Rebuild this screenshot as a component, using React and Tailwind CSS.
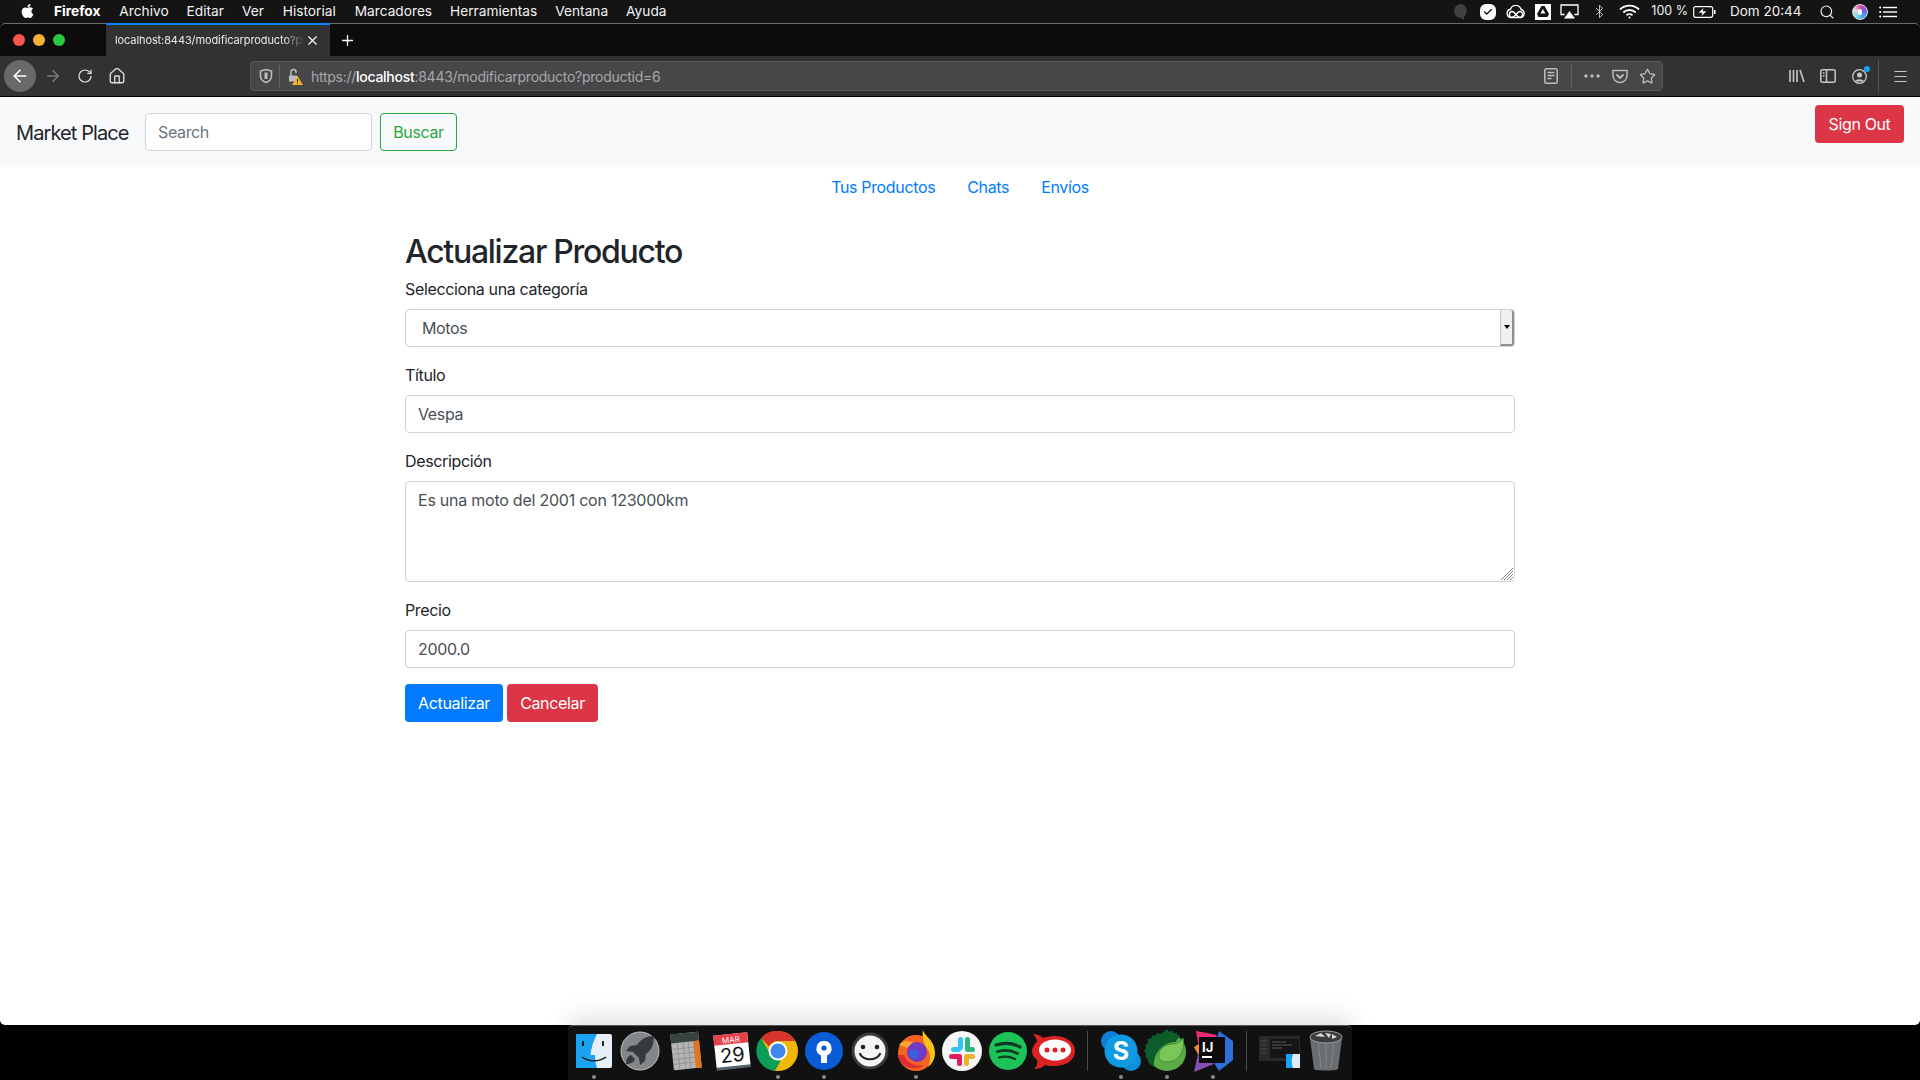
import React from "react";
import { FaApple } from "react-icons/fa";
import { ArrowLeft, ArrowRight, RotateCw, House, Plus, X, Search, Bluetooth, Menu, Star, Check } from "lucide-react";

const menuItems = [
  ["Archivo", "ml-[19px]"],
  ["Editar", "ml-[18px]"],
  ["Ver", "ml-[18px]"],
  ["Historial", "ml-[19px]"],
  ["Marcadores", "ml-[19px]"],
  ["Herramientas", "ml-[18px]"],
  ["Ventana", "ml-[18px]"],
  ["Ayuda", "ml-[18px]"],
];

const MenuBar = () => (
  <div className="h-[23px] shrink-0 flex items-center bg-[#141414] text-[#f2f2f2] text-[13.7px] pl-[20px] pr-[23px]">
    <FaApple className="w-[15px] h-[16px] mb-[2px] text-white" />
    <span className="ml-[19px] font-bold text-white">Firefox</span>
    {menuItems.map(([label, ml]) => (
      <span key={label} className={ml}>{label}</span>
    ))}
    <div className="ml-auto flex items-center">
      <svg width="16" height="17" viewBox="0 0 16 17"><path d="M8 1a7 7 0 1 0 0 14l3 1.500V13.500A7 7 0 0 0 8 1z" fill="#414143" /></svg>
      <span className="ml-[11px] w-[16px] h-[16px] rounded-[6px] bg-white flex items-center justify-center">
        <Check className="w-[10px] h-[10px] text-black" strokeWidth={3} />
      </span>
      <svg className="ml-[10px]" width="20" height="14" viewBox="0 0 20 14" fill="none" stroke="#fff" strokeWidth="1.400">
        <path d="M5.500 12.500a4.200 4.200 0 0 1-1-8.300A5.500 5.500 0 0 1 15 4.300a4.200 4.200 0 0 1-.5 8.200z" />
        <path d="M5.500 12.500c-3-1-2.500-6 .5-6 3.500 0 4.500 6 8 6 3 0 3.500-6 0-6-3.500 0-4.500 6-8.500 6" />
      </svg>
      <span className="ml-[9px] w-[16px] h-[16px] bg-white flex items-center justify-center">
        <svg width="12" height="11" viewBox="0 0 12 11"><path d="M4.500 0h3l4.500 8-1.500 3H1.500L0 8z" fill="#111" /><path d="M5.800 3 3.500 7.500h5z" fill="#fff" /></svg>
      </span>
      <svg className="ml-[9px]" width="19" height="15" viewBox="0 0 19 15" fill="none">
        <path d="M4.500 10.500H1V1h17v9.500h-3.500" stroke="#fff" strokeWidth="1.300" />
        <path d="M9.500 7 15 14.500H4z" fill="#fff" />
      </svg>
      <Bluetooth className="ml-[13px] w-[15px] h-[17px] text-[#e8e8e8]" strokeWidth={1.300} />
      <svg className="ml-[12px]" width="21" height="15" viewBox="0 0 21 15" fill="none" stroke="#fff" strokeWidth="1.800">
        <path d="M1 5.500a13.500 13.500 0 0 1 19 0" />
        <path d="M4.300 8.500a9 9 0 0 1 12.400 0" />
        <path d="M7.500 11.300a4.300 4.300 0 0 1 6 0" />
        <circle cx="10.500" cy="13.500" r="1" fill="#fff" stroke="none" />
      </svg>
      <span className="ml-[11px] text-[12.5px]">100 %</span>
      <svg className="ml-[5px]" width="23" height="12" viewBox="0 0 23 12" fill="none">
        <rect x="0.700" y="0.700" width="19" height="10.600" rx="2" stroke="#fff" strokeWidth="1.200" />
        <rect x="21" y="4" width="1.500" height="4" fill="#fff" />
        <path d="M11 1 5 7h4L8 11l6-6h-4z" fill="#fff" stroke="#141414" strokeWidth="0.700" />
      </svg>
      <span className="ml-[14px] w-[73px] whitespace-nowrap text-[13.5px]">Dom 20:44</span>
      <Search className="ml-[16px] w-[16px] h-[16px]" strokeWidth={1.700} />
      <span className="ml-[17px] w-[16px] h-[16px] rounded-full bg-[conic-gradient(#e0479e,#7a5cd6,#3fa9f5,#7fd6e8,#e0e0e0,#e0479e)] border border-[#ddd] flex items-center justify-center">
        <span className="w-[4px] h-[6px] bg-white rounded-full" />
      </span>
      <svg className="ml-[11px]" width="18" height="12" viewBox="0 0 18 12" fill="#fff">
        <circle cx="1.200" cy="1.500" r="1.100" /><circle cx="1.200" cy="6" r="1.100" /><circle cx="1.200" cy="10.500" r="1.100" />
        <rect x="4" y="0.800" width="14" height="1.400" /><rect x="4" y="5.300" width="14" height="1.400" /><rect x="4" y="9.800" width="14" height="1.400" />
      </svg>
    </div>
  </div>
);

const TabBar = () => (
  <div className="h-[33px] shrink-0 flex bg-[#0c0c0d] rounded-t-[5px] border-t border-[#6a6a6a] text-white">
    <div className="w-[106px] flex items-center pl-[13px] gap-[8px]">
      <span className="w-[12px] h-[12px] rounded-full bg-[#f6544f]" />
      <span className="w-[12px] h-[12px] rounded-full bg-[#fbb030]" />
      <span className="w-[12px] h-[12px] rounded-full bg-[#2bc93f]" />
    </div>
    <div className="w-[224px] -mt-[1px] bg-[#323234] border-t-2 border-[#0a84ff] flex items-center pl-[9px]">
      <span className="w-[189px] overflow-hidden whitespace-nowrap text-[11px] tracking-[-0.1px] text-[#e8e8e8] [mask-image:linear-gradient(to_right,black_90%,transparent)]">
        localhost:8443/modificarproducto?productid=6
      </span>
      <X className="ml-[1px] w-[15px] h-[15px]" strokeWidth={1.800} />
    </div>
    <div className="flex items-center ml-[9px]">
      <Plus className="w-[17px] h-[17px]" strokeWidth={1.800} />
    </div>
  </div>
);

const Toolbar = () => (
  <div className="h-[41px] shrink-0 flex items-center bg-[#323234] border-b border-black text-[#e0e0e0] pl-[4px]">
    <span className="flex items-center justify-center w-[32px] h-[32px] rounded-full bg-[#69696b]">
      <ArrowLeft className="w-[20px] h-[20px] text-white" strokeWidth={1.800} />
    </span>
    <ArrowRight className="ml-[8px] w-[18px] h-[18px] text-[#7d7d7f]" strokeWidth={1.800} />
    <RotateCw className="ml-[15px] w-[16px] h-[16px]" strokeWidth={1.800} />
    <House className="ml-[15px] w-[18px] h-[18px]" strokeWidth={1.800} />
    <div className="ml-[124px] w-[1413px] h-[30px] rounded-[4px] bg-[#474749] border border-[#555557] flex items-center text-[#a8a8aa]">
      <svg className="ml-[8px]" width="14" height="16" viewBox="0 0 14 16" fill="none" stroke="#bdbdbf" strokeWidth="1.600">
        <path d="M7 1.500 1.500 3v5c0 3 2.500 5.500 5.500 6.500 3-1 5.500-3.500 5.500-6.500V3z" />
        <path d="M7 4.500v6.500" strokeWidth="3" />
      </svg>
      <span className="ml-[6px] w-px h-[24px] bg-[#616163]" />
      <svg className="ml-[7px]" width="16" height="17" viewBox="0 0 16 17">
        <path d="M2 7.500h8v6H2z" fill="#bdbdbf" />
        <path d="M4 7.500V4a2.500 2.500 0 0 1 5 0v1" fill="none" stroke="#bdbdbf" strokeWidth="1.500" />
        <path d="M10.500 8 16 17H5z" fill="#fbb030" />
        <rect x="10" y="11" width="1" height="3" fill="#222" /><rect x="10" y="14.800" width="1" height="1" fill="#222" />
      </svg>
      <span className="ml-[8px] text-[14px] tracking-[-0.27px] whitespace-nowrap">
        https://<span className="text-white font-medium">localhost</span>:8443/modificarproducto?productid=6
      </span>
      <div className="ml-auto flex items-center text-[#bdbdbf]">
        <svg width="14" height="16" viewBox="0 0 14 16" fill="none" stroke="currentColor" strokeWidth="1.500">
          <rect x="0.800" y="0.800" width="12.400" height="14.400" rx="1.500" />
          <path d="M3.500 4.500h7M3.500 7.500h7M3.500 10.500h4" />
        </svg>
        <span className="ml-[13px] w-px h-[24px] bg-[#616163]" />
        <svg className="ml-[12px]" width="16" height="4" viewBox="0 0 16 4" fill="currentColor">
          <circle cx="2" cy="2" r="1.700" /><circle cx="8" cy="2" r="1.700" /><circle cx="14" cy="2" r="1.700" />
        </svg>
        <svg className="ml-[12px]" width="16" height="15" viewBox="0 0 16 15" fill="none" stroke="currentColor" strokeWidth="1.500">
          <path d="M1 1.500h14v5a7 7 0 0 1-14 0z" />
          <path d="m4.500 5.500 3.500 3.500 3.500-3.500" strokeWidth="1.800" />
        </svg>
        <Star className="ml-[11px] mr-[6px] w-[17px] h-[17px]" strokeWidth={1.800} />
      </div>
    </div>
    <div className="ml-auto flex items-center text-[#c8c8ca] pr-[11px]">
      <svg width="16" height="14" viewBox="0 0 16 14" fill="none" stroke="currentColor" strokeWidth="1.600">
        <path d="M1 1v12M4.500 1v12M8 1v12M11 1l4 12" />
      </svg>
      <svg className="ml-[15px]" width="16" height="14" viewBox="0 0 16 14" fill="none" stroke="currentColor" strokeWidth="1.500">
        <rect x="0.800" y="0.800" width="14.400" height="12.400" rx="1.500" />
        <path d="M6.500 1v12M2.800 4h1.700M2.800 7h1.700" />
      </svg>
      <span className="relative ml-[16px] w-[15px] h-[15px]">
        <svg width="15" height="15" viewBox="0 0 15 15" fill="none" stroke="currentColor" strokeWidth="1.300">
          <circle cx="7.500" cy="7.500" r="6.800" />
          <circle cx="7.500" cy="6" r="2.500" fill="currentColor" stroke="none" />
          <path d="M3 12.500c1-3 8-3 9 0" fill="currentColor" stroke="none" />
        </svg>
        <span className="absolute -top-[3px] -right-[3px] w-[6px] h-[6px] rounded-full bg-[#0ea5e9]" />
      </span>
      <span className="ml-[11px] w-px h-[33px] bg-[#555557]" />
      <Menu className="ml-[13px] w-[17px] h-[17px]" strokeWidth={1.500} />
    </div>
  </div>
);

const inputClass =
  "block w-full h-[38px] px-[12px] text-[16px] text-[#495057] bg-white border border-[#ced4da] rounded-[4px] outline-none";

const Field = ({ label, children }) => (
  <div className="mb-[16px]">
    <label className="block mb-[8px] text-[16px] leading-[24px]">{label}</label>
    {children}
  </div>
);

const Page = () => (
  <div className="flex-1 min-h-0 bg-white text-[#212529] tracking-[-0.022em] rounded-b-[5px] overflow-hidden">
    <nav className="h-[70px] bg-[#f8f9fa] flex items-start pl-[16px] pr-[16px]">
      <span className="mt-[21px] w-[112px] text-[20px] leading-[30px] tracking-[-0.045em] whitespace-nowrap">Market Place</span>
      <input
        placeholder="Search"
        className="ml-[17px] mt-[16px] w-[227px] h-[38px] px-[12px] text-[16px] bg-white border border-[#ced4da] rounded-[4px] outline-none placeholder:text-[#6c757d]"
      />
      <button className="ml-[8px] mt-[16px] w-[77px] h-[38px] text-[16px] text-[#28a745] border border-[#28a745] rounded-[4px]">Buscar</button>
      <button className="ml-auto mt-[8px] w-[89px] h-[38px] text-[16px] text-white bg-[#dc3545] rounded-[4px]">Sign Out</button>
    </nav>
    <div className="h-[40px] flex items-center justify-center gap-[32px] text-[16px] text-[#007bff]">
      <a>Tus Productos</a>
      <a>Chats</a>
      <a>Envíos</a>
    </div>
    <div className="w-[1110px] mx-auto mt-[26px]">
      <h1 className="text-[32px] leading-[38px] font-[550] tracking-[-0.04em] mb-[6px]">Actualizar Producto</h1>
      <Field label="Selecciona una categoría">
        <div className="relative">
          <select className={`${inputClass} appearance-none pl-[16px]`} defaultValue="Motos">
            <option>Motos</option>
          </select>
          <span className="absolute right-[1px] top-[1px] w-[14px] h-[36px] bg-[#efefef] border-l border-[#c4c4c4] border-r-2 border-r-[#8f8f8f] border-b-2 border-b-[#8f8f8f] rounded-r-[3px] flex items-center justify-center">
            <span className="w-0 h-0 border-x-[3px] border-x-transparent border-t-[4px] border-t-black" />
          </span>
        </div>
      </Field>
      <Field label="Título">
        <input className={inputClass} defaultValue="Vespa" />
      </Field>
      <Field label="Descripción">
        <div className="relative">
          <textarea
            className="block w-full h-[101px] px-[12px] py-[6px] text-[16px] leading-[24px] tracking-[-0.015em] text-[#495057] bg-white border border-[#ced4da] rounded-[4px] outline-none resize-none"
            defaultValue="Es una moto del 2001 con 123000km"
          />
          <svg className="absolute right-[2px] bottom-[2px] pointer-events-none" width="12" height="12" viewBox="0 0 12 12" stroke="#8a8a8a" strokeWidth="1">
            <path d="M12 0 0 12M12 3 3 12M12 6 6 12M12 9 9 12" />
          </svg>
        </div>
      </Field>
      <Field label="Precio">
        <input className={inputClass} defaultValue="2000.0" />
      </Field>
      <div className="flex gap-[4px]">
        <button className="w-[98px] h-[38px] text-[16px] text-white bg-[#007bff] rounded-[4px]">Actualizar</button>
        <button className="w-[91px] h-[38px] text-[16px] text-white bg-[#dc3545] rounded-[4px]">Cancelar</button>
      </div>
    </div>
  </div>
);

const I = ({ children }) => (
  <svg width="46" height="46" viewBox="0 0 46 46" className="overflow-visible">{children}</svg>
);

const Finder = () => (
  <I>
    <rect x="5" y="6" width="36" height="34" rx="2" fill="#e6eff7" />
    <path d="M7 6h19c-4 8-6 14-6.500 21H24c0 4 .5 8 2 13H7a2 2 0 0 1-2-2V8a2 2 0 0 1 2-2z" fill="#1aa3f2" />
    <path d="M12 13v5M32 13v5" stroke="#111" strokeWidth="1.800" />
    <path d="M11 29c7 5 17 5 24 0" fill="none" stroke="#111" strokeWidth="1.300" />
  </I>
);

const Launchpad = () => (
  <I>
    <circle cx="23" cy="23" r="19" fill="#83878a" stroke="#bfc3c5" strokeWidth="1" />
    <path d="M37 8c-7 0-13 3-17 9l-7 1-4 5 7 1 6 6 1 7 5-4 1-7c6-4 8-11 8-18z" fill="#37393c" />
    <path d="M14 27c-3 1-5 4-5 9 5 0 8-2 9-5z" fill="#37393c" />
  </I>
);

const Calculator = () => (
  <I>
    <g transform="rotate(-6 23 23)">
      <rect x="9" y="5" width="28" height="36" rx="1" fill="#b5b5b5" />
      <rect x="9" y="5" width="28" height="9" fill="#37423f" />
      <rect x="31" y="14" width="6" height="27" fill="#e07620" />
      <path d="M9 20h22M9 25h22M9 30h22M9 35h22M15 14v27M21 14v27M26 14v27" stroke="#8d8d8d" strokeWidth="0.800" />
    </g>
  </I>
);

const Calendar = () => (
  <I>
    <g transform="rotate(-6 23 23)">
      <rect x="6" y="9" width="34" height="32" fill="#59646a" />
      <rect x="6" y="6" width="34" height="32" fill="#fff" />
      <rect x="6" y="6" width="34" height="10" fill="#e8414a" />
      <text x="23" y="14.500" textAnchor="middle" fontSize="8" fill="#fff" fontFamily="Inter, sans-serif">MAR</text>
      <text x="23" y="34" textAnchor="middle" fontSize="20" fill="#111" fontFamily="Inter, sans-serif">29</text>
    </g>
  </I>
);

const Chrome = () => (
  <I>
    <circle cx="23" cy="23" r="20" fill="#f2b705" />
    <path d="M23 3a20 20 0 0 1 17.300 10H23a10 10 0 0 0-9 5.500L6 10A20 20 0 0 1 23 3z" fill="#d8352a" />
    <path d="M6 10l8.500 14.500A10 10 0 0 0 26 32l-6 10.800A20 20 0 0 1 6 10z" fill="#0c9d58" />
    <circle cx="23" cy="23" r="9.500" fill="#fff" />
    <circle cx="23" cy="23" r="7.500" fill="#3f87ee" />
  </I>
);

const OnePassword = () => (
  <I>
    <circle cx="23" cy="23" r="19" fill="#0a5cd6" />
    <path d="M23 13a7.500 7.500 0 0 0-3 14.400V35h6v-7.600A7.500 7.500 0 0 0 23 13z" fill="#fff" />
    <circle cx="23" cy="20" r="2.600" fill="#0a5cd6" />
  </I>
);

const Smile = () => (
  <I>
    <circle cx="23" cy="23" r="17" fill="#f5f5f5" stroke="#3a3a3a" strokeWidth="3" />
    <circle cx="16" cy="19" r="2.300" fill="#222" />
    <circle cx="30" cy="19" r="2.300" fill="#222" />
    <path d="M13 26c4 7 16 7 20 0" fill="none" stroke="#222" strokeWidth="2.200" strokeLinecap="round" />
  </I>
);

const Firefox = () => (
  <I>
    <circle cx="23" cy="25" r="18" fill="#f5631f" />
    <path d="M30 1c0 7 12 10 12 24 0 6-3 11-7 14 3-6 3-14-2-20-3-5-4-11-3-18z" fill="#fdc21c" />
    <path d="M6 17c4-5 10-5 14-2l-6 5z" fill="#ffa436" />
    <circle cx="24" cy="24" r="10" fill="#7139c4" />
    <circle cx="21" cy="26" r="5" fill="#3d60d8" />
    <path d="M5 27c2 12 16 17 26 10-8 2-16-1-20-10z" fill="#e02c36" />
  </I>
);

const Slack = () => (
  <I>
    <circle cx="23" cy="23" r="20" fill="#f6f6f6" />
    <rect x="19" y="9" width="5" height="13" rx="2.500" fill="#36c5f0" />
    <rect x="12" y="19" width="10" height="5" rx="2.500" fill="#36c5f0" />
    <rect x="26" y="9" width="5" height="13" rx="2.500" fill="#2eb67d" />
    <rect x="26" y="19" width="10" height="5" rx="2.500" fill="#2eb67d" />
    <rect x="25" y="26" width="5" height="12" rx="2.500" fill="#ecb22e" />
    <rect x="26" y="26" width="10" height="5" rx="2.500" fill="#ecb22e" />
    <rect x="18" y="26" width="5" height="12" rx="2.500" fill="#e01e5a" />
    <rect x="10" y="26" width="12" height="5" rx="2.500" fill="#e01e5a" />
  </I>
);

const Spotify = () => (
  <I>
    <circle cx="23" cy="23" r="19" fill="#1ed760" fillOpacity="0.900" />
    <g fill="none" stroke="#0c3b20" strokeLinecap="round">
      <path d="M11 17c8-2.500 17-2 24 2" strokeWidth="3.200" />
      <path d="M12.500 23.500c7-2 14-1.500 20 2" strokeWidth="2.800" />
      <path d="M14 29.500c6-1.500 11-1 16 1.500" strokeWidth="2.300" />
    </g>
  </I>
);

const RocketChat = () => (
  <I>
    <path d="M2 6c4 0 8 2 10 4 3-1 7-2 11-2 12 0 21 6 21 15s-9 15-21 15c-3 0-6 0-9-1-3 3-7 4-11 4 3-3 4-6 3-9C2 29 1 26 1 23c0-3 2-7 5-9 0-3-2-6-4-8z" fill="#db2323" />
    <ellipse cx="24" cy="22" rx="16" ry="10.500" fill="#fff" />
    <circle cx="16" cy="22" r="2.500" fill="#db2323" /><circle cx="24" cy="22" r="2.500" fill="#db2323" /><circle cx="32" cy="22" r="2.500" fill="#db2323" />
  </I>
);

const Skype = () => (
  <I>
    <circle cx="13" cy="13" r="10" fill="#0f7fd6" />
    <circle cx="33" cy="33" r="10" fill="#0f8fdc" />
    <circle cx="23" cy="23" r="16.500" fill="#0f9be4" />
    <text x="23" y="32" textAnchor="middle" fontSize="25" fontWeight="700" fill="#fff" fontFamily="Inter, sans-serif">S</text>
  </I>
);

const Spring = () => (
  <I>
    <circle cx="23" cy="24" r="19" fill="#5bab46" />
    <path d="M23 1l2 3 3-2 1.500 3.500 3.500-1 .5 3 3-.5-5 7C20 14 9 24 10 39l-3-2-3-3-.5-3-2.500-2 1-3-2-3 2-3-1-3 3-2-.5-4 3.500-.5 1-3.500 3 1 2-3 3 1.500z" fill="#0d5c2c" />
    <path d="M39 10c2 11-2 24-17 24-6 0-8-5-7-9 2-7 9-9 14-9 5 0 8-3 10-6z" fill="#7cc558" stroke="#3f8f3f" strokeWidth="1" />
  </I>
);

const Idea = () => (
  <I>
    <polygon points="6,3 27,7 20,21 9,20" fill="#f02a78" />
    <polygon points="29,3 43,13 43,32 29,43 21,30" fill="#2f6fdc" />
    <polygon points="4,19 12,14 10,30" fill="#f58a2e" />
    <polygon points="4,44 8,26 24,36" fill="#8a4fb5" />
    <rect x="9" y="9" width="26" height="26" fill="#0b0b0b" />
    <text x="12" y="24" fontSize="13" fontWeight="700" fill="#fff" fontFamily="Inter, sans-serif">IJ</text>
    <rect x="12" y="28" width="10" height="2" fill="#fff" />
  </I>
);

const Thumb = () => (
  <I>
    <rect x="2" y="8" width="41" height="25" fill="#2a2a2a" />
    <rect x="13" y="11" width="29" height="19" fill="#151515" />
    <path d="M15 14h14M15 17h20M15 20h10" stroke="#6a6a6a" strokeWidth="0.800" />
    <path d="M4 13h6M4 17h6M4 21h6M4 25h6" stroke="#555" strokeWidth="0.800" />
    <rect x="29" y="26" width="14" height="14" fill="#dfeaf4" />
    <path d="M29 26h7c-1 4-2 9 0 14h-7z" fill="#1aa3f2" />
  </I>
);

const Trash = () => (
  <I>
    <path d="M7 10h32l-4 31c-1 2-23 2-24 0z" fill="#6b6e70" />
    <path d="M15 12l3 28M23 12v29M31 12l-3 28" stroke="#85888a" strokeWidth="1" />
    <ellipse cx="23" cy="9" rx="16" ry="6" fill="#3b3b3d" stroke="#9a9c9e" strokeWidth="1" />
    <path d="M12 8l6-3 4 4zM22 5l6 1-2 4zM29 6l5 3-5 2z" fill="#d8d8d8" />
  </I>
);

const Slot = ({ icon: Icon, dot }) => (
  <div className="relative w-[46px] h-[46px] shrink-0">
    <Icon />
    {dot && <span className="absolute left-[21px] top-[47px] w-[4px] h-[4px] rounded-full bg-[#8a8a8a]" />}
  </div>
);

const Separator = () => (
  <div className="w-[21px] h-[40px] flex justify-center mt-[3px] shrink-0">
    <span className="w-px h-full bg-[#4a4a4a]" />
  </div>
);

const Dock = () => (
  <div className="h-[55px] shrink-0 bg-black flex justify-center">
    <div className="w-[784px] h-full flex items-start pt-[2px] pl-[3px] bg-[#111] border-t border-[#555] rounded-t-[5px] shadow-[0_-8px_24px_rgba(0,0,0,0.12)]">
      <Slot icon={Finder} dot />
      <Slot icon={Launchpad} />
      <Slot icon={Calculator} />
      <Slot icon={Calendar} />
      <Slot icon={Chrome} dot />
      <Slot icon={OnePassword} dot />
      <Slot icon={Smile} />
      <Slot icon={Firefox} dot />
      <Slot icon={Slack} />
      <Slot icon={Spotify} />
      <Slot icon={RocketChat} />
      <Separator />
      <Slot icon={Skype} dot />
      <Slot icon={Spring} dot />
      <Slot icon={Idea} dot />
      <Separator />
      <Slot icon={Thumb} />
      <Slot icon={Trash} />
    </div>
  </div>
);

export default function App() {
  return (
    <div className="w-[1920px] h-[1080px] flex flex-col bg-black overflow-hidden font-['Inter',sans-serif]">
      <MenuBar />
      <TabBar />
      <Toolbar />
      <Page />
      <Dock />
    </div>
  );
}
